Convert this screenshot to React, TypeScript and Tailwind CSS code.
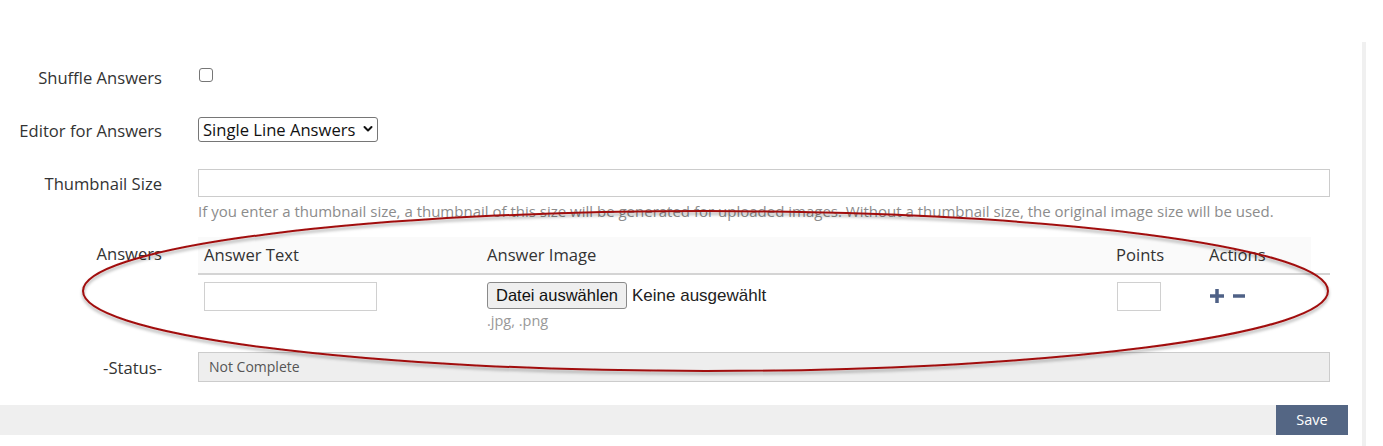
import React from "react";

const font = { fontFamily: '"Open Sans", "Liberation Sans", sans-serif' };

function Label({ children }: { children: React.ReactNode }) {
  return (
    <div className="text-right text-[16.6px] text-[#333] leading-[24px] self-center">{children}</div>
  );
}

export default function App() {
  return (
    <div className="relative w-[1383px] h-[446px] overflow-hidden bg-white flex" style={font}>
      <div className="w-[1362px] flex flex-col">
        <div className="pt-[66px] pr-[32px] grid grid-cols-[162px_1132px] gap-x-[36px]">
          {/* Shuffle */}
          <Label>Shuffle Answers</Label>
          <div className="h-[24px] flex items-start">
            <input
              type="checkbox"
              className="appearance-none mt-[2px] ml-[1px] w-[14px] h-[14px] border border-[#767676] rounded-[3px] bg-white"
            />
          </div>

          {/* Editor */}
          <div className="mt-[27px] text-right text-[16.6px] text-[#333] leading-[24px] pt-[2px]">Editor for Answers</div>
          <div className="mt-[27px] h-[25px] flex">
            <div className="relative w-[180px] h-[25px]">
              <select
                className="appearance-none w-full h-full border border-[#767676] rounded-[3px] bg-white pl-[4px] text-[16.6px] text-[#111] leading-[23px] outline-none"
                style={font}
                defaultValue="single"
              >
                <option value="single">Single Line Answers</option>
              </select>
              <svg className="absolute right-[5px] top-[8px] pointer-events-none" width="10" height="8" viewBox="0 0 10 8">
                <path d="M1.5 2 L5 5.5 L8.5 2" fill="none" stroke="#111" strokeWidth="2" strokeLinecap="round" strokeLinejoin="round" />
              </svg>
            </div>
          </div>

          {/* Thumbnail */}
          <div className="mt-[26px] text-right text-[16.6px] text-[#333] leading-[28px] pt-[1px]">Thumbnail Size</div>
          <div className="mt-[26px] flex flex-col">
            <input type="text" className="w-full h-[28px] border border-[#cccccc] bg-white outline-none" />
            <div className="mt-[4px] text-[15px] leading-[20px] text-[#8c8c8c] whitespace-nowrap">
              If you enter a thumbnail size, a thumbnail of this size will be generated for uploaded images. Without a thumbnail size, the original image size will be used.
            </div>
          </div>

          {/* Answers */}
          <div className="mt-[16px] text-right text-[16.6px] text-[#333] leading-[34px]">Answers</div>
          <div className="mt-[16px] flex flex-col">
            <div className="border-b-2 border-[#d4d4d4]">
              <div className="w-[1113px] h-[36px] bg-[#fafafa] grid grid-cols-[283px_629px_93px_108px] text-[16.6px] text-[#333] items-center">
                <div className="pl-[6px]">Answer Text</div>
                <div className="pl-[6px]">Answer Image</div>
                <div className="pl-[6px]">Points</div>
                <div className="pl-[6px]">Actions</div>
              </div>
            </div>
            <div className="grid grid-cols-[283px_629px_93px_108px] pt-[7px] h-[72px]">
              <div className="pl-[6px]">
                <input type="text" className="w-[173px] h-[29px] border border-[#d0d0d0] bg-white outline-none" />
              </div>
              <div className="pl-[6px] flex flex-col">
                <div className="flex items-center h-[27px]" style={{ fontFamily: '"Liberation Sans", Arial, sans-serif' }}>
                  <button className="h-[27px] px-[8px] border border-[#8a8a8a] rounded-[3px] bg-[#efefef] text-[16.5px] text-[#111] leading-[25px] whitespace-nowrap">
                    Datei auswählen
                  </button>
                  <span className="ml-[5px] text-[17px] text-[#222] whitespace-nowrap">Keine ausgewählt</span>
                </div>
                <div className="mt-[2px] text-[14.5px] leading-[20px] text-[#999]">.jpg, .png</div>
              </div>
              <div className="pl-[7px]">
                <input type="text" className="w-[44px] h-[29px] border border-[#d0d0d0] bg-white outline-none" />
              </div>
              <div className="pl-[7px] flex items-start gap-[9px] pt-[7px]">
                <svg width="14" height="14" viewBox="0 0 14 14">
                  <rect x="5.25" y="0" width="3.5" height="14" fill="#4f6186" />
                  <rect x="0" y="5.25" width="14" height="3.5" fill="#4f6186" />
                </svg>
                <svg width="12" height="14" viewBox="0 0 12 14">
                  <rect x="0" y="5.25" width="12" height="3.5" fill="#4f6186" />
                </svg>
              </div>
            </div>
          </div>

          {/* Status */}
          <div className="mt-[5px] text-right text-[16.6px] text-[#333] leading-[30px] pt-[1px]">-Status-</div>
          <div className="mt-[5px]">
            <div className="w-full h-[30px] border border-[#cccccc] bg-[#eeeeee] pl-[10px] text-[14px] text-[#555] leading-[28px]">
              Not Complete
            </div>
          </div>
        </div>

        {/* Footer */}
        <div className="mt-[22px] w-[1348px] h-[30px] bg-[#efefef] flex justify-end">
          <button className="w-[72px] h-[30px] bg-[#546684] text-white text-[14.5px]" style={font}>
            Save
          </button>
        </div>
      </div>
      <div className="mt-[42px] w-[4px] h-[404px] bg-[#f0f0f0]" />

      {/* Annotation ellipse */}
      <svg className="absolute left-0 top-0 pointer-events-none" width="1383" height="446" viewBox="0 0 1383 446">
        <defs>
          <filter id="sh" x="-10%" y="-30%" width="120%" height="160%">
            <feDropShadow dx="0" dy="2.5" stdDeviation="1.6" floodColor="#000" floodOpacity="0.35" />
          </filter>
        </defs>
        <ellipse cx="705.5" cy="291" rx="622.5" ry="80" fill="none" stroke="#a10f0f" strokeWidth="2" filter="url(#sh)" />
      </svg>
    </div>
  );
}
